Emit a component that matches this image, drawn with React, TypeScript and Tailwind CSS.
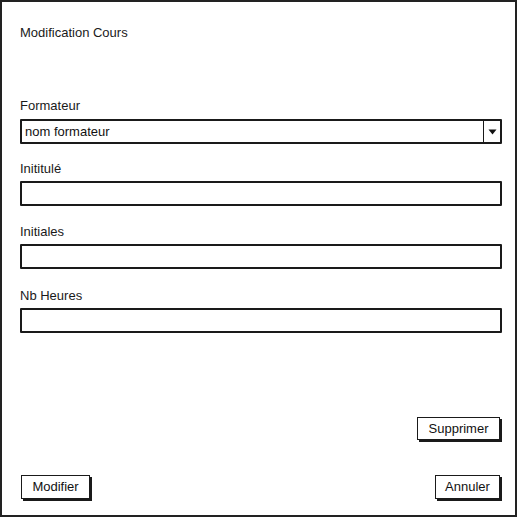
export default function App() {
  const field = "h-[25px] w-[482px] border-2 border-[#1a1a1a] rounded-[1px] bg-white";
  const label = "text-[13px] leading-[16px] text-[#1a1a1a]";
  const btn =
    "h-[23px] border-[1.5px] border-[#1a1a1a] bg-white shadow-[2px_2px_0_#1a1a1a] text-[13px] leading-[18px] text-[#111] font-['Liberation_Sans',Arial,sans-serif]";

  return (
    <div className="w-[519px] h-[518px] bg-white font-['Liberation_Sans',Arial,sans-serif]">
      <div className="w-[517px] h-[517px] border-2 border-[#222] flex flex-col pl-[18px] pt-[23px]">
        {/* Title */}
        <div className={label}>Modification Cours</div>

        {/* Formateur select */}
        <div className={`${label} mt-[57px]`}>Formateur</div>
        <div className={`${field} mt-[5px] flex items-center`}>
          <span className="flex-1 pl-[3px] text-[13px] text-[#111]">nom formateur</span>
          <div className="w-[17px] h-full border-l-[1.5px] border-[#1a1a1a] flex items-center justify-center">
            <svg width="9" height="6" viewBox="0 0 9 6">
              <path d="M0.5 0.5 H8.5 L4.5 5.5 Z" fill="#111" />
            </svg>
          </div>
        </div>

        {/* Intitulé */}
        <div className={`${label} mt-[17px]`}>Inititulé</div>
        <div className={`${field} mt-[4px]`} />

        {/* Initiales */}
        <div className={`${label} mt-[18px]`}>Initiales</div>
        <div className={`${field} mt-[4px]`} />

        {/* Nb Heures */}
        <div className={`${label} mt-[19px]`}>Nb Heures</div>
        <div className={`${field} mt-[4px]`} />

        {/* Supprimer */}
        <div className="mt-[84px] w-[482px] flex justify-end pr-[2px]">
          <button className={`${btn} w-[83px]`}>Supprimer</button>
        </div>

        {/* Bottom buttons */}
        <div className="mt-[35px] w-[482px] flex justify-between pl-[1px] pr-[2px]">
          <button className={`${btn} h-[24px] w-[69px]`}>Modifier</button>
          <button className={`${btn} h-[24px] w-[65px]`}>Annuler</button>
        </div>
      </div>
    </div>
  );
}
